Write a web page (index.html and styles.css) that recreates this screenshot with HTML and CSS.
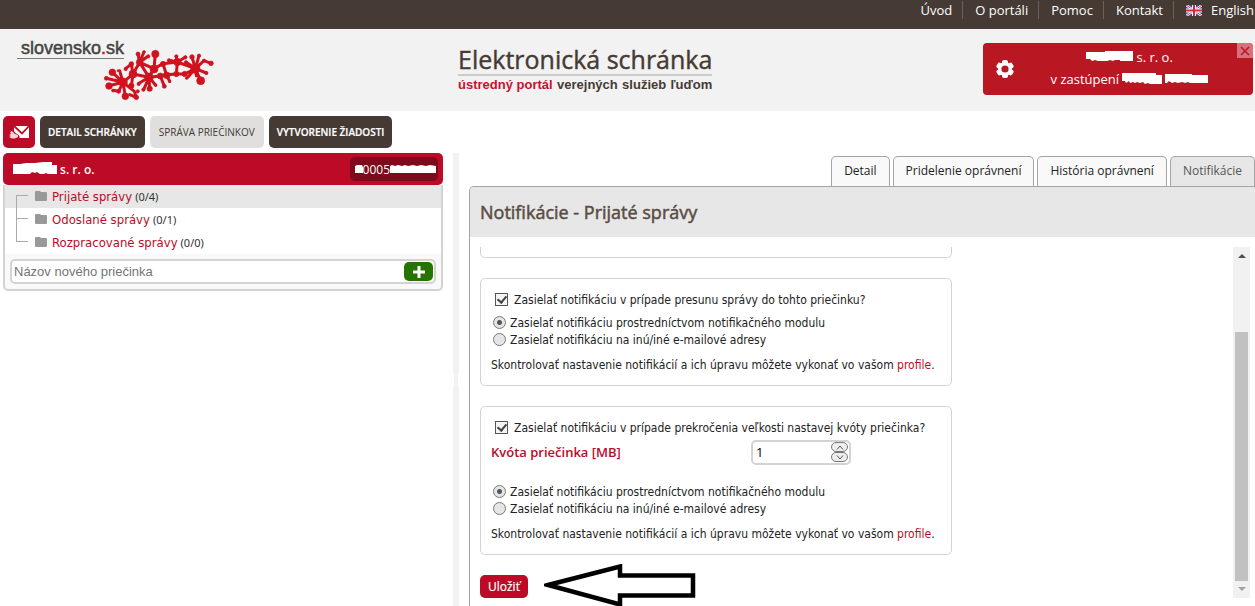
FILE: index.html
```html
<!DOCTYPE html>
<html lang="sk">
<head>
<meta charset="utf-8">
<title>Elektronická schránka</title>
<link rel="stylesheet" href="styles.css">
</head>
<body>
<nav class="topbar">
  <a href="#">Úvod</a>
  <a href="#">O portáli</a>
  <a href="#">Pomoc</a>
  <a href="#">Kontakt</a>
  <a href="#" class="lang">
    <svg class="flag" viewBox="0 0 16 11" width="16" height="11" aria-hidden="true"><path fill="#2c4a9a" d="M0 0h16v11H0z"/><path stroke="#fff" stroke-width="2.4" d="M0 0l16 11M16 0L0 11"/><path stroke="#d8253c" stroke-width="1" d="M0 0l16 11M16 0L0 11"/><path stroke="#fff" stroke-width="4" d="M8 0v11M0 5.5h16"/><path stroke="#d8253c" stroke-width="2" d="M8 0v11M0 5.5h16"/></svg>
    English
  </a>
</nav>

<header class="header">
  <a href="#" class="logo">
    <span class="logo-name">slovensko<span class="red">.</span>sk</span>
    <svg class="logo-map" viewBox="310 60 336 162" width="112" height="54" aria-hidden="true">
      <g stroke="#d0121f" stroke-width="9" stroke-linecap="round" fill="none">
        <path d="M370 163L338 133M370 163L328 173M370 163L320 151M370 163L377 205M370 163L357 190L340 187M370 163L400 138L420 103M370 163L360 128M370 163L404 190L410 208M400 138L395 173M400 138L395 108L378 122M400 138L448 148L420 103L415 78M420 103L433 72M420 103L463 122L467 78M420 103L445 85M448 148L450 183M448 148L432 185M448 148L418 166M448 148L482 144L500 140L490 107L463 122M482 144L494 175M500 140L530 138L533 102L490 107M533 102L508 97M533 102L530 86M533 102L558 87M533 102L587 122L603 158M587 122L555 138L530 138M587 122L577 87M587 122L598 83M587 122L613 98L634 106M587 122L620 135M587 122L559 102M587 122L562 150M463 122L448 148M500 140L510 160M448 148L468 172M410 208L390 200M587 122L590 143"/>
      </g>
      <g fill="#d0121f" stroke="#d0121f" stroke-width="2">
        <circle cx="370" cy="163" r="13"/><circle cx="338" cy="133" r="10"/><circle cx="328" cy="174" r="10"/><circle cx="320" cy="151" r="6"/><circle cx="377" cy="205" r="10"/><circle cx="357" cy="190" r="6"/><circle cx="340" cy="188" r="4"/><circle cx="400" cy="138" r="12"/><circle cx="395" cy="173" r="8"/><circle cx="410" cy="208" r="7"/><circle cx="414" cy="190" r="5"/><circle cx="395" cy="108" r="7"/><circle cx="378" cy="123" r="5"/><circle cx="355" cy="128" r="3"/><circle cx="420" cy="103" r="10"/><circle cx="415" cy="78" r="6"/><circle cx="433" cy="72" r="4"/><circle cx="446" cy="85" r="5"/><circle cx="467" cy="78" r="11"/><circle cx="463" cy="123" r="12"/><circle cx="448" cy="148" r="13"/><circle cx="450" cy="182" r="8"/><circle cx="431" cy="185" r="5"/><circle cx="417" cy="168" r="5"/><circle cx="482" cy="144" r="9"/><circle cx="494" cy="175" r="6"/><circle cx="468" cy="171" r="4"/><circle cx="490" cy="108" r="8"/><circle cx="501" cy="142" r="10"/><circle cx="510" cy="160" r="4"/><circle cx="530" cy="138" r="8"/><circle cx="533" cy="102" r="11"/><circle cx="508" cy="97" r="5"/><circle cx="530" cy="85" r="5"/><circle cx="557" cy="88" r="5"/><circle cx="559" cy="103" r="5"/><circle cx="587" cy="122" r="14"/><circle cx="555" cy="138" r="8"/><circle cx="577" cy="87" r="7"/><circle cx="598" cy="83" r="5"/><circle cx="613" cy="98" r="5"/><circle cx="634" cy="106" r="7"/><circle cx="620" cy="135" r="5"/><circle cx="603" cy="158" r="12"/><circle cx="560" cy="151" r="3"/>
      </g>
    </svg>
  </a>
  <div class="title">
    <h1>Elektronická schránka</h1>
    <p><span class="red">ústredný portál</span><span>verejných</span><span>služieb</span><span>ľuďom</span></p>
  </div>
  <div class="account">
    <button type="button" class="gear" aria-label="Nastavenia">
      <svg viewBox="0 0 18 18" width="18" height="18"><g fill="#fff"><rect x="6" y="0" width="6" height="18" rx="2"/><rect x="6" y="0" width="6" height="18" rx="2" transform="rotate(60 9 9)"/><rect x="6" y="0" width="6" height="18" rx="2" transform="rotate(120 9 9)"/><circle cx="9" cy="9" r="7"/></g><circle cx="9" cy="9" r="3.6" fill="#b91822"/></svg>
    </button>
    <div class="account-text">
      <p><svg class="mask" viewBox="0 0 47 11" width="47" height="11" aria-hidden="true"><path fill="#fff" d="M0 1h19V0h28v10H34v-1h-5l-2 1-3-1-3 1H12L9 9 6 10 4 8H0z"/></svg> s. r. o.</p>
      <p>v zastúpení <svg class="mask" viewBox="0 0 86 11" width="86" height="11" aria-hidden="true"><path fill="#fff" d="M0 0h34v2h6v9H28l-2-1-3 1-2-2-3 1-3-1-2 1-2-1-3 1-1-2-3 2-1-2H0zM43 1h27v1h16v8H68l-2-1-3 1-3-1-4 1-3-1-3 1-3-2-2 2h-2z"/></svg></p>
    </div>
    <button type="button" class="close" aria-label="Zavrieť">
      <svg viewBox="0 0 10 10" width="10" height="10"><path d="M1 1l8 8M9 1L1 9" stroke="#b91822" stroke-width="1.6"/></svg>
    </button>
  </div>
</header>

<div class="toolbar">
  <button type="button" class="tool mail" aria-label="Správy">
    <svg viewBox="0 0 20 14" width="20" height="14"><path fill="#fff" d="M5 1h15v12H10.500c.5-2-1-4-3.500-4.500L5 6z"/><path fill="none" stroke="#bd0a26" stroke-width="1.800" d="M4 0l9 8.500L20 1"/><path fill="#f6d4d6" d="M1 7l2-1 3 3 3 1v2l-3 1.500H3L0 12l2-1-2-1 2-1z"/></svg>
  </button>
  <button type="button" class="tool dark">DETAIL SCHRÁNKY</button>
  <button type="button" class="tool light">SPRÁVA PRIEČINKOV</button>
  <button type="button" class="tool dark">VYTVORENIE ŽIADOSTI</button>
</div>

<div class="workspace">
  <aside class="sidebar">
    <div class="owner">
      <span><svg class="mask" viewBox="0 0 44 12" width="44" height="12" aria-hidden="true"><path fill="#fff" d="M0 2h7l6-1h9l8-1h9v3h5v9h-9l-2-1-2 1h-4l-3-2-2 1-3-1-2 2H0z"/></svg> s. r. o.</span>
      <span class="owner-id"><svg viewBox="0 0 8 8" width="8" height="8" aria-hidden="true"><path fill="#fff" d="M0 1l2-1h5l1 2v6H0z"/></svg>0005<svg viewBox="0 0 46 8" width="46" height="8" aria-hidden="true"><path fill="#fff" d="M0 1l2-1 3 1 3-1 4 1 3-1 3 1 5-1 4 1 4-1 5 1 4-1 6 1v7H0z"/></svg></span>
    </div>
    <div class="tree-box">
      <ul class="tree">
        <li class="active"><svg class="folder" viewBox="0 0 12 10" width="12" height="10" aria-hidden="true"><path fill="#999" d="M0 1q0-1 1-1h4l1 1h5q1 0 1 1v7q0 1-1 1H1q-1 0-1-1z"/></svg><a href="#">Prijaté správy</a><span>(0/4)</span></li>
        <li><svg class="folder" viewBox="0 0 12 10" width="12" height="10" aria-hidden="true"><path fill="#999" d="M0 1q0-1 1-1h4l1 1h5q1 0 1 1v7q0 1-1 1H1q-1 0-1-1z"/></svg><a href="#">Odoslané správy</a><span>(0/1)</span></li>
        <li><svg class="folder" viewBox="0 0 12 10" width="12" height="10" aria-hidden="true"><path fill="#999" d="M0 1q0-1 1-1h4l1 1h5q1 0 1 1v7q0 1-1 1H1q-1 0-1-1z"/></svg><a href="#">Rozpracované správy</a><span>(0/0)</span></li>
      </ul>
      <form class="new-folder">
        <div class="field">
          <input type="text" placeholder="Názov nového priečinka" aria-label="Názov nového priečinka">
          <button type="button" class="add" aria-label="Pridať"><svg viewBox="0 0 12 12" width="12" height="12"><path d="M6 0v12M0 6h12" stroke="#fff" stroke-width="3"/></svg></button>
        </div>
      </form>
    </div>
  </aside>
  <div class="splitter"></div>
  <main class="content">
    <div class="tabs">
      <a href="#" class="tab">Detail</a>
      <a href="#" class="tab">Pridelenie oprávnení</a>
      <a href="#" class="tab">História oprávnení</a>
      <a href="#" class="tab current">Notifikácie</a>
    </div>
    <section class="panel">
      <h2>Notifikácie - Prijaté správy</h2>
      <div class="scroll">
        <form class="settings">
          <div class="card tail"></div>
          <div class="card">
            <label class="check"><input type="checkbox" checked>Zasielať notifikáciu v prípade presunu správy do tohto priečinku?</label>
            <div class="radios">
              <label><input type="radio" name="move" checked>Zasielať notifikáciu prostredníctvom notifikačného modulu</label>
              <label><input type="radio" name="move">Zasielať notifikáciu na inú/iné e-mailové adresy</label>
            </div>
            <p>Skontrolovať nastavenie notifikácií a ich úpravu môžete vykonať vo vašom <a href="#">profile</a>.</p>
          </div>
          <div class="card">
            <label class="check"><input type="checkbox" checked>Zasielať notifikáciu v prípade prekročenia veľkosti nastavej kvóty priečinka?</label>
            <div class="quota">
              <label for="quota">Kvóta priečinka [MB]</label>
              <div class="spin">
                <input type="text" id="quota" value="1">
                <div class="steps">
                  <button type="button" aria-label="Zvýšiť"><svg viewBox="0 0 8 5" width="8" height="5"><path d="M1 4.500L4 1l3 3.500" fill="none" stroke="#555"/></svg></button>
                  <button type="button" aria-label="Znížiť"><svg viewBox="0 0 8 5" width="8" height="5"><path d="M1 .5L4 4l3-3.500" fill="none" stroke="#555"/></svg></button>
                </div>
              </div>
            </div>
            <div class="radios">
              <label><input type="radio" name="quota-mode" checked>Zasielať notifikáciu prostredníctvom notifikačného modulu</label>
              <label><input type="radio" name="quota-mode">Zasielať notifikáciu na inú/iné e-mailové adresy</label>
            </div>
            <p>Skontrolovať nastavenie notifikácií a ich úpravu môžete vykonať vo vašom <a href="#">profile</a>.</p>
          </div>
          <div class="actions">
            <button type="button" class="save">Uložiť</button>
            <svg class="arrow" viewBox="0 0 154 42" width="154" height="42" aria-hidden="true"><path d="M4 21L76 2.500v9H149v20H76v9z" fill="#fff" stroke="#000" stroke-width="4.500"/></svg>
          </div>
        </form>
        <div class="scrollbar" aria-hidden="true">
          <svg viewBox="0 0 8 4" width="8" height="4"><path fill="#505050" d="M0 4l4-4 4 4z"/></svg>
          <div class="thumb"></div>
          <svg viewBox="0 0 8 4" width="8" height="4"><path fill="#a3a3a3" d="M0 0l4 4 4-4z"/></svg>
        </div>
      </div>
    </section>
  </main>
</div>
</body>
</html>
```
FILE: styles.css
```css
* { box-sizing: border-box; }
html, body { height: 100%; }
body {
  margin: 0;
  display: flex;
  flex-direction: column;
  overflow: hidden;
  background: #fff;
  color: #222;
  font-family: "Open Sans", sans-serif;
  font-size: 12px;
}
a { color: #bd0a26; text-decoration: none; }
button { font-family: inherit; border: 0; padding: 0; cursor: pointer; }
p, h1, h2, ul { margin: 0; padding: 0; }
svg { flex: none; }
.red { color: #c8102e; }

.topbar {
  flex: none;
  display: flex;
  justify-content: flex-end;
  height: 29px;
  padding: 1px 1px 0 0;
  background: #453a34;
}
.topbar a {
  display: flex;
  align-items: center;
  gap: 9px;
  height: 18px;
  padding: 0 10px 0 12px;
  color: #fff;
  font-size: 13px;
  border-left: 1px solid #6c625c;
}
.topbar a:first-child { border-left: 0; }
.topbar .lang { padding-right: 0; }

.header {
  flex: none;
  display: grid;
  grid-template-columns: 458px 1fr auto;
  align-items: start;
  height: 82px;
  padding-right: 2px;
  background: #f2f2f2;
}
.logo { display: flex; padding: 9px 0 0 17px; }
.logo-name {
  height: 21px;
  padding: 0 0 0 4px;
  border-bottom: 1px solid #777c7a;
  color: #444;
  font: 18px/21px "Liberation Sans", sans-serif;
  -webkit-text-stroke: 0.5px;
}
.logo-map { margin: 10px 0 0 -21px; }
.title { justify-self: start; padding-top: 16px; }
.title h1 {
  border-bottom: 2px solid #ccc;
  color: #453a34;
  font-size: 25px;
  font-weight: 400;
  line-height: 29px;
  -webkit-text-stroke: 0.4px #453a34;
}
.title p {
  display: flex;
  justify-content: space-between;
  color: #453a34;
  font: bold 13px/17px "Liberation Sans", sans-serif;
}
.account {
  display: flex;
  align-items: center;
  width: 270px;
  height: 52px;
  margin-top: 14px;
  padding-left: 13px;
  border-radius: 4px;
  overflow: hidden;
  background: #b91822;
  color: #fff;
  font-size: 13px;
}
.gear { display: flex; background: none; }
.account-text { flex: 1; padding: 0 0 2px 8px; text-align: center; line-height: 22px; }
.close {
  align-self: flex-start;
  display: flex;
  align-items: center;
  justify-content: center;
  width: 16px;
  height: 15px;
  background: #d9707d;
}

.toolbar { flex: none; display: flex; gap: 5px; padding: 5px 3px; }
.tool {
  display: flex;
  align-items: center;
  height: 32px;
  padding: 0 8px;
  border-radius: 5px;
  font-size: 10px;
}
.mail { width: 32px; padding: 0 6px; background: #bd0a26; }
.dark { background: #453a34; color: #fff; font-weight: 600; -webkit-text-stroke: 0.2px; }
.light { padding: 0 9px; background: #e0dfdd; color: #453a34; }

.workspace { flex: 1; display: flex; min-height: 0; }
.sidebar { flex: none; width: 440px; margin-left: 3px; }
.owner {
  display: flex;
  align-items: center;
  justify-content: space-between;
  height: 32px;
  padding: 0 5px 0 10px;
  border-radius: 5px;
  background: #bd0a26;
  color: #fff;
  font-size: 12px;
  font-weight: 600;
}
.owner-id {
  display: flex;
  align-items: center;
  height: 24px;
  padding: 0 2px 0 5px;
  border-radius: 5px;
  background: #7d0b1b;
  font-weight: 400;
}
.tree-box {
  border: 2px solid #d3d3d3;
  border-top: 0;
  border-radius: 0 0 5px 5px;
  background: #f9f9f9;
}
.tree { list-style: none; background: #fff; }
.tree li {
  position: relative;
  display: flex;
  align-items: center;
  height: 23px;
  padding-left: 30px;
  color: #333;
  font-family: "Noto Sans", sans-serif;
  font-size: 11px;
}
.tree li::before {
  content: "";
  position: absolute;
  left: 11px;
  top: 10px;
  width: 12px;
  border-top: 1px solid #aaa;
}
.tree li::after {
  content: "";
  position: absolute;
  left: 11px;
  top: 0;
  bottom: 0;
  border-left: 1px solid #aaa;
}
.tree li:first-child::after { top: 10px; }
.tree li:last-child::after { bottom: 12px; }
.tree .active { background: #e7e7e7; }
.folder { margin-bottom: 2px; }
.tree a { margin: 0 3px 0 5px; font: 13px "DejaVu Sans Condensed", sans-serif; }
.new-folder { padding: 5px; }
.field {
  display: flex;
  align-items: center;
  height: 25px;
  padding-right: 1px;
  border: 2px solid #d3d3d3;
  border-radius: 5px;
  background: #fff;
}
.field input {
  flex: 1;
  min-width: 0;
  border: 0;
  padding: 0 2px;
  background: none;
  outline: 0;
  font: 13px "Liberation Sans", sans-serif;
}
.add {
  display: flex;
  align-items: center;
  justify-content: center;
  width: 29px;
  height: 19px;
  border-radius: 5px;
  background: #267300;
}
.splitter {
  flex: none;
  display: flex;
  align-items: center;
  justify-content: center;
  width: 6px;
  margin: 0 10px;
  background: #f2f2f2;
}
.splitter::before {
  content: "";
  width: 4px;
  height: 12px;
  border: solid #fff;
  border-width: 0 1px;
}

.content { flex: 1; display: flex; flex-direction: column; min-width: 0; }
.tabs { flex: none; display: flex; justify-content: flex-end; gap: 3px; padding-top: 3px; }
.tab {
  height: 30px;
  padding: 0 12px;
  border: 1px solid #a5a5a5;
  border-bottom: 0;
  border-radius: 5px 5px 0 0;
  background: #f9f9f9;
  color: #222;
  line-height: 28px;
}
.tab.current { background: #e7e7e7; color: #555; }
.panel {
  flex: 1;
  display: flex;
  flex-direction: column;
  min-height: 0;
  border: solid #a5a5a5;
  border-width: 1px 0 0 1px;
  border-radius: 5px 0 0 0;
  overflow: hidden;
}
.panel h2 {
  flex: none;
  height: 50px;
  padding-left: 10px;
  background: #e7e7e7;
  color: #5a4d44;
  font-size: 18px;
  font-weight: 400;
  line-height: 50px;
  -webkit-text-stroke: 0.5px;
}
.scroll { flex: 1; display: flex; justify-content: space-between; min-height: 0; padding: 10px 5px 0 10px; }
.settings {
  display: flex;
  flex-direction: column;
  gap: 20px;
  width: 472px;
  font-family: "DejaVu Sans Condensed", sans-serif;
}
.card { flex: none; padding: 12px 10px 11px; border: 1px solid #d3d3d3; border-radius: 5px; }
.tail { height: 11px; padding: 0; border-top: 0; border-radius: 0 0 5px 5px; }
.card p { margin-top: 9px; line-height: 17px; }
.card label { display: flex; align-items: center; height: 17px; white-space: nowrap; }
.card .check { padding-left: 4px; }
.check input, .radios input {
  appearance: none;
  flex: none;
  width: 13px;
  height: 13px;
  margin: 0 6px 0 0;
  border: 1px solid #555;
  background: #f5f5f5;
}
.check input { display: grid; place-items: center; }
.check input:checked::before {
  content: "";
  width: 4px;
  height: 7px;
  margin-bottom: 2px;
  border: solid #444;
  border-width: 0 2px 2px 0;
  transform: rotate(40deg);
}
.radios { margin-top: 6px; padding-left: 2px; }
.radios input { margin-right: 4px; border-color: #777; border-radius: 50%; background: #e6e6e6; }
.radios input:checked { background: radial-gradient(circle, #555 0 2px, #e6e6e6 3px); }
.quota { display: flex; align-items: center; height: 24px; margin-top: 4px; }
.quota label { width: 260px; color: #bd0a26; font: 600 13px "Open Sans", sans-serif; }
.quota + .radios { margin-top: 19px; }
.spin {
  display: flex;
  align-items: center;
  width: 100px;
  height: 25px;
  padding: 0 1px 0 3px;
  border: 2px solid #d3d3d3;
  border-radius: 5px;
}
.spin input { flex: 1; min-width: 0; padding: 0; border: 0; outline: 0; font: 13px "Open Sans", sans-serif; }
.steps { display: flex; flex-direction: column; }
.steps button {
  display: flex;
  align-items: center;
  justify-content: center;
  width: 17px;
  height: 10px;
  border: 1px solid #777;
  border-radius: 5px;
  background: #eee;
}
.actions { flex: none; display: flex; align-items: flex-start; height: 34px; }
.save {
  height: 23px;
  padding: 0 8px;
  border-radius: 5px;
  background: #bd0a26;
  color: #fff;
  font: 12px/22px "Open Sans", sans-serif;
  -webkit-text-stroke: 0.2px;
}
.arrow { margin: -11px 0 0 16px; }
.scrollbar {
  display: flex;
  flex-direction: column;
  align-items: center;
  width: 17px;
  margin-bottom: 8px;
  padding: 7px 2px;
  background: #f1f1f1;
}
.thumb { flex: none; width: 13px; height: 74%; margin-top: auto; margin-bottom: 6px; background: #c1c1c1; }
```
